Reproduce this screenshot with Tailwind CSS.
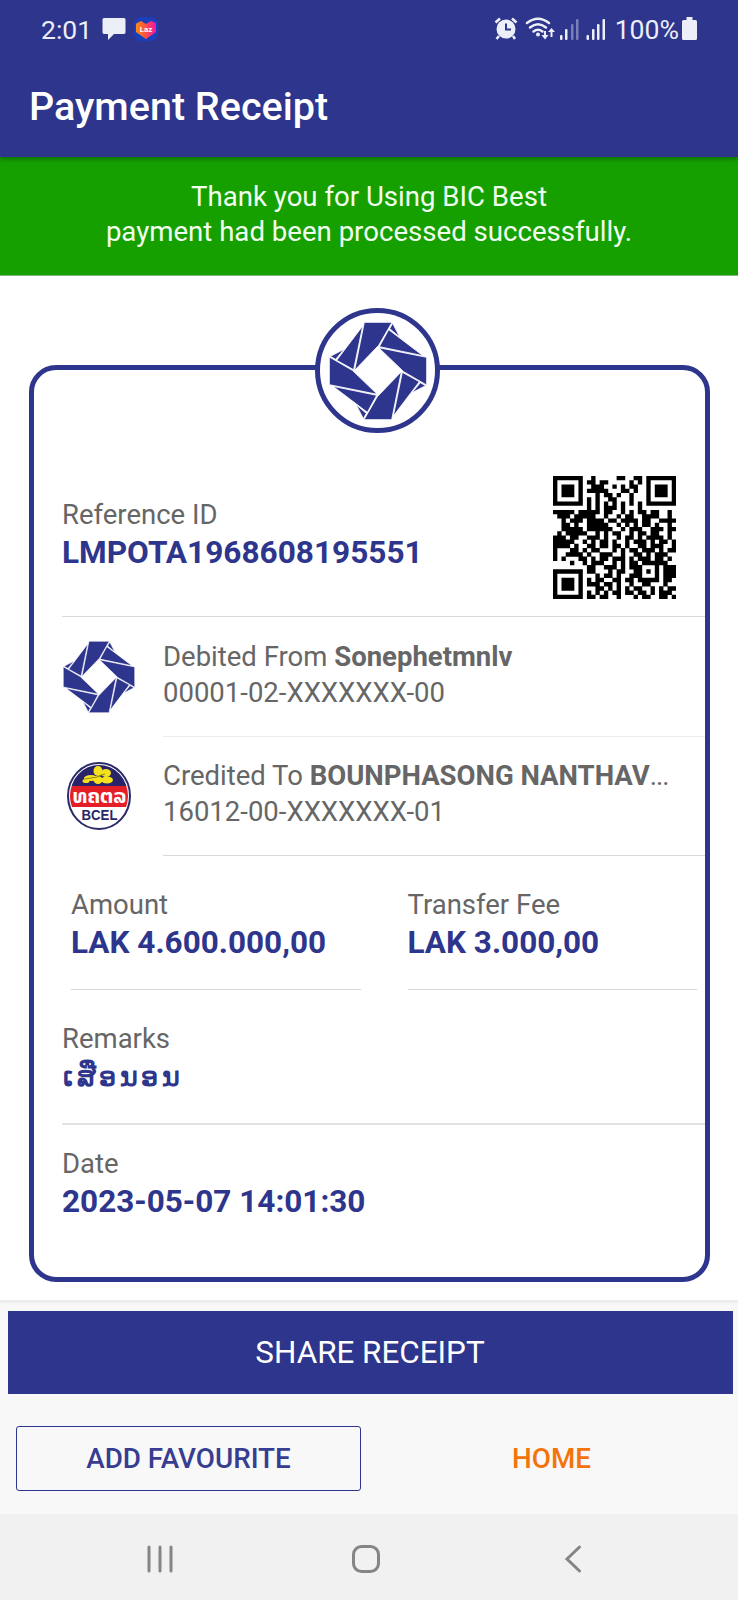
<!DOCTYPE html>
<html lang="en">
<head>
<meta charset="utf-8">
<title>Payment Receipt</title>
<script src="https://cdn.jsdelivr.net/npm/@tailwindcss/browser@4"></script>
</head>
<body class="w-[738px] h-[1600px] overflow-hidden bg-white flex flex-col font-[Roboto,'Noto_Sans',sans-serif] text-[27.5px] text-[#666666]">
<svg class="hidden">
  <defs>
    <g id="blade" stroke="#fff" stroke-width="2.500">
      <path d="M192 79H275L235 148L163 223Z"/>
      <path d="M187 90L160 221L109 193Z"/>
      <path d="M90 181L131 160L106 190Z"/>
    </g>
    <symbol id="logo" viewBox="86 78 294 294">
      <use href="#blade"/>
      <use href="#blade" transform="rotate(90 233 225)"/>
      <use href="#blade" transform="rotate(180 233 225)"/>
      <use href="#blade" transform="rotate(270 233 225)"/>
    </symbol>
  </defs>
</svg>

<header class="h-[157px] shrink-0 bg-[#2e358c] text-white relative z-10 shadow-[0_2px_5px_rgba(0,0,0,0.35)]">
  <div class="h-[58px] pl-[41px] pr-[41px] flex items-center text-[#eceef8]">
    <span class="text-[26.5px] leading-[32px] w-[61px] pt-[2px]">2:01</span>
    <svg class="w-[24px] h-[24px]" viewBox="0 0 24 24"><path fill="currentColor" d="M2 1H22Q23.500 1 23.500 2.500V15Q23.500 17 22 17H12L6 23V17H2Q.5 17 .5 15V2.500Q.5 1 2 1Z"/></svg>
    <svg class="w-[24px] h-[26px] ml-[8px]" viewBox="0 0 24 26">
      <defs><linearGradient id="heart"><stop offset="0" stop-color="#ff8a10"/><stop offset=".5" stop-color="#fb4f45"/><stop offset="1" stop-color="#f313b4"/></linearGradient></defs>
      <rect y="1" width="24" height="24" rx="7" fill="#1a3fb8"/>
      <path fill="url(#heart)" d="M3 7L7 5L12 8L17 5L22 7V16L12 23L2 16V8Z"/>
      <text x="12" y="15.500" text-anchor="middle" font-size="8" font-weight="700" fill="#fff">Laz</text>
    </svg>
    <svg class="ml-auto w-[114px] h-[26px]" viewBox="0 0 114 26" fill="currentColor" stroke="none">
      <circle cx="12" cy="13" r="9.500"/>
      <path d="M12 7.500V13.500H17" fill="none" stroke="#2e358c" stroke-width="2"/>
      <path d="M1.500 6.500L6 2.500M18 2.500L22.500 6.500M5 20L2.500 23M19 20L21 23" fill="none" stroke="currentColor" stroke-width="2.600"/>
      <g fill="none" stroke="currentColor" stroke-width="2.500" stroke-linecap="round"><path d="M33 7Q44-1.500 55 7"/><path d="M36 11.500Q44 5 52 11.500"/><path d="M39.500 15.500Q44 12 48.500 15.500"/></g>
      <circle cx="44" cy="18.500" r="2"/>
      <path d="M50 15H52V19H54.500L51 23.500L47.500 19H50ZM56.500 21V16H54L57.500 12L61 16H58.500V21Z"/>
      <rect x="66" y="19" width="2.500" height="5" rx="1"/><rect x="71" y="13" width="2.500" height="11" rx="1"/>
      <rect x="77" y="8" width="2.500" height="16" rx="1" opacity=".4"/><rect x="82" y="3" width="2.500" height="21" rx="1" opacity=".4"/>
      <rect x="92.500" y="19" width="2.500" height="5" rx="1"/><rect x="98" y="13" width="2.500" height="11" rx="1"/>
      <rect x="103" y="8" width="2.500" height="16" rx="1"/><rect x="108.500" y="3" width="2.500" height="21" rx="1"/>
    </svg>
    <span class="ml-[7px] text-[26.6px] leading-[32px] pt-[2px]">100%</span>
    <svg class="w-[15px] h-[24px] ml-[3px]" viewBox="0 0 15 24"><path fill="currentColor" d="M4.500 0H10.500V3H13.500Q15 3 15 4.500V21.500Q15 23 13.500 23H1.500Q0 23 0 21.500V4.500Q0 3 1.500 3H4.500Z"/></svg>
  </div>
  <h1 class="pl-[29px] pt-[25px] text-[39.5px] leading-[48px] font-medium">Payment Receipt</h1>
</header>

<section class="h-[119px] shrink-0 bg-[#15a000] text-[#f2fff0] text-center text-[27.6px] leading-[35px] pt-[22px] border-b border-[#7fb878]">
  Thank you for Using BIC Best<br>payment had been processed successfully.
</section>

<main class="h-[1024px] shrink-0 pt-[89px] pl-[29px] pr-[28px]">
  <article class="relative h-[917px] border-5 border-[#2e358c] rounded-[27px] flex flex-col pl-[28px]">
    <div class="absolute left-[281px] top-[-62px] size-[125px] rounded-full border-5 border-[#2e358c] bg-white flex items-center justify-center">
      <svg class="w-[98px] h-[98px] fill-[#2e358c]"><use href="#logo"/></svg>
    </div>

    <section class="h-[247px] shrink-0 border-b border-[#d9d9d9] flex justify-between pt-[106px] pr-[29px]">
      <div class="pt-[21px]">
        <p class="leading-[36px]">Reference ID</p>
        <p class="text-[31.6px] leading-[39px] font-bold text-[#2e358c]">LMPOTA1968608195551</p>
      </div>
      <svg id="qr" class="w-[123px] h-[123px]" viewBox="0 0 29 29" fill="#000"></svg>
    </section>

    <section class="h-[120px] shrink-0 flex">
      <div class="w-[101px] pt-[24px] pl-px"><svg class="w-[72px] h-[72px] fill-[#2e358c]"><use href="#logo"/></svg></div>
      <div class="flex-1 border-b border-[#ececec] pt-[22px] leading-[36px]">
        <p>Debited From <b>Sonephetmnlv</b></p>
        <p>00001-02-XXXXXXX-00</p>
      </div>
    </section>

    <section class="h-[119px] shrink-0 flex">
      <div class="w-[101px] pt-[24px] pl-[5px]">
        <svg class="w-[66px] h-[70px]" viewBox="0 0 66 70">
          <defs><clipPath id="disc"><ellipse cx="32" cy="35" rx="29" ry="31"/></clipPath></defs>
          <ellipse cx="32" cy="35" rx="31" ry="33" fill="#fff" stroke="#2b2b68" stroke-width="2"/>
          <g clip-path="url(#disc)"><rect width="66" height="25" fill="#29246a"/><rect y="25" width="66" height="21" fill="#e41e26"/></g>
          <g fill="#f6e21c"><ellipse cx="31" cy="10" rx="4.500" ry="5"/><ellipse cx="39" cy="12" rx="5" ry="4"/><ellipse cx="40" cy="19" rx="6" ry="3.500"/><ellipse cx="31" cy="19" rx="4.500" ry="4"/><ellipse cx="24" cy="17" rx="7" ry="3"/><ellipse cx="19" cy="20" rx="3.500" ry="2"/></g>
          <path d="M18 18L30 16L38 13" stroke="#8d8520" fill="none"/>
          <g transform="translate(32.500 42) scale(1 1.350)"><text text-anchor="middle" font-family="Noto Sans Lao, DejaVu Sans, sans-serif" font-weight="700" font-size="15" textLength="54" lengthAdjust="spacingAndGlyphs" fill="#fff">ທຄຕລ</text></g>
          <text x="32.500" y="59" text-anchor="middle" font-family="Liberation Sans, sans-serif" font-weight="700" font-size="14" textLength="36" lengthAdjust="spacingAndGlyphs" fill="#29246a">BCEL</text>
        </svg>
      </div>
      <div class="flex-1 min-w-0 border-b border-[#d9d9d9] pt-[21px] pr-[20px] leading-[36px]">
        <p class="whitespace-nowrap">Credited To <b>BOUNPHASONG NANTHAV</b><span class="tracking-[-1px]">...</span></p>
        <p>16012-00-XXXXXXX-01</p>
      </div>
    </section>

    <section class="h-[134px] shrink-0 flex gap-[47px] pl-[9px] pr-[8px]">
      <div class="flex-1 border-b border-[#d9d9d9] pt-[31px]">
        <p class="leading-[36px]">Amount</p>
        <p class="text-[31.5px] leading-[39px] font-bold text-[#2e358c] whitespace-nowrap">LAK 4.600.000,00</p>
      </div>
      <div class="flex-1 border-b border-[#d9d9d9] pt-[31px]">
        <p class="leading-[36px]">Transfer Fee</p>
        <p class="text-[31.5px] leading-[39px] font-bold text-[#2e358c] whitespace-nowrap">LAK 3.000,00</p>
      </div>
    </section>

    <section class="h-[135px] shrink-0 border-b-2 border-[#e2e2e2] pt-[31px]">
      <p class="leading-[36px]">Remarks</p>
      <p class="text-[27px] leading-[40px] font-semibold tracking-[3.5px] pl-px text-[#2e358c]">ເສືອນອນ</p>
    </section>

    <section class="pt-[21px]">
      <p class="leading-[36px]">Date</p>
      <p class="text-[31.5px] leading-[40px] font-bold text-[#2e358c]">2023-05-07 14:01:30</p>
    </section>
  </article>
</main>

<footer class="h-[214px] shrink-0 bg-[#f8f8f8] border-t-3 border-[#eeeeee] pt-[8px]">
  <div class="ml-[7.5px] mr-[5.5px] h-[83px] bg-[#2e358c] text-white text-[31.4px] flex items-center justify-center">SHARE RECEIPT</div>
  <div class="mt-[32px] pl-[16px] flex font-medium text-[27.8px]">
    <div class="w-[345px] h-[65px] border-[1.5px] border-[#2e358c] rounded-[3px] text-[#373d90] flex items-center justify-center">ADD FAVOURITE</div>
    <div class="flex-1 pl-[4px] h-[65px] text-[#f4730b] flex items-center justify-center">HOME</div>
  </div>
</footer>

<nav class="h-[86px] shrink-0 bg-[#f1f1f1] pl-[145px] pt-[30px] flex">
  <svg class="w-[30px] h-[30px]" viewBox="0 0 30 30" fill="none" stroke="#858585" stroke-width="3" stroke-linecap="round"><path d="M4 3V27M15 3V27M26 3V27"/></svg>
  <svg class="w-[30px] h-[30px] ml-[176px]" viewBox="0 0 30 30" fill="none" stroke="#858585" stroke-width="3"><rect x="2.500" y="2.500" width="25" height="25" rx="8"/></svg>
  <svg class="w-[20px] h-[30px] ml-[182px]" viewBox="0 0 20 30" fill="none" stroke="#858585" stroke-width="3" stroke-linecap="round"><path d="M16.500 3L4 15L16.500 27"/></svg>
</nav>

<script>
const rows = [
"#######..#.....##..##.#######",
"#.....#.##.##.....#.#.#.....#",
"#.###.#..###..#.#.##..#.###.#",
"#.###.#.#####...##.#..#.###.#",
"#.###.#...#.##.#..#...#.###.#",
"#.....#.#.#..##...#...#.....#",
"#######.#.#.#.#.#.#.#.#######",
"........#.#.###.#...#........",
"#####.#####.##..#.#.##.##..#.",
".###.#####..#..#.##..####..#.",
"..#.###.####.##.####.##..####",
"..##.#..#####..#.#.#.##.#..#.",
"..#####.######..#.###..###.##",
".#.#####..#.#.##..#.##.##..#.",
"###.##..###.#..#.##.#.####.#.",
"#####..#.#.##.#..#.###.#.##.#",
"####.#..##.##.##.#..##.###..#",
"#...##.#.##...#.#.##.###.#.##",
"#..####.#..###..#..##.#.###..",
"#.#...##.#.##.###.#.###.##.#.",
"....#..#.###..#.#.##.######..",
"........##..###.#.###...#.###",
"#######.##...#.##..##.#.#.###",
"#.....#...#.##.#..###...#.###",
"#.###.#.#.##..##.##.#####.##.",
"#.###.#.###.##.#..#..##...#..",
"#.###.#...##.#.#.#.##..#.#.##",
"#.....#.#.#.#.##.##.##.#.###.",
"#######.##.##..#...#.##..##.#"];
let d = "";
rows.forEach((r, y) => [...r].forEach((c, x) => { if (c === "#") d += `M${x} ${y}h1.03v1.03h-1.03z`; }));
document.getElementById("qr").innerHTML = `<path d="${d}"/>`;
</script>
</body>
</html>
